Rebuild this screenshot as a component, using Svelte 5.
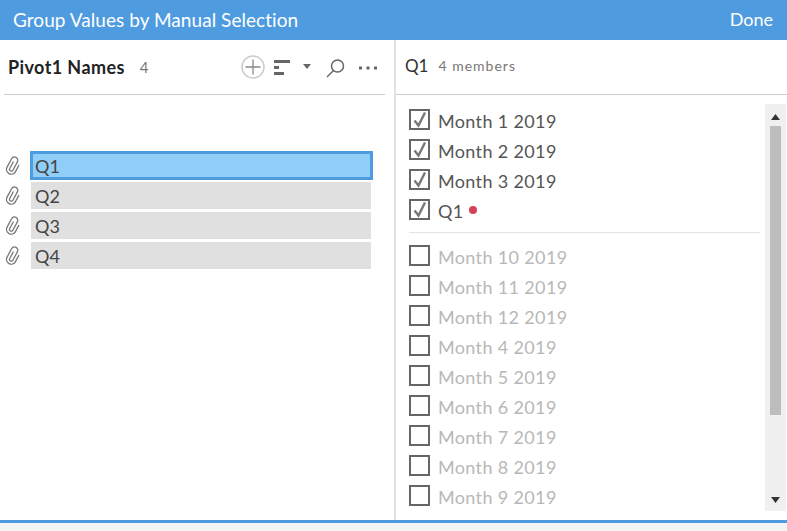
<script>
	const checked = ['Month 1 2019', 'Month 2 2019', 'Month 3 2019', 'Q1'];
	const unchecked = ['Month 10 2019', 'Month 11 2019', 'Month 12 2019', 'Month 4 2019', 'Month 5 2019', 'Month 6 2019', 'Month 7 2019', 'Month 8 2019', 'Month 9 2019'];
	const groups = ['Q1', 'Q2', 'Q3', 'Q4'];
</script>

<div class="dialog">
	<header>
		<span class="heading">Group Values by Manual Selection</span>
		<span>Done</span>
	</header>
	<main>
		<section class="left">
			<div class="toolbar">
				<b>Pivot1 Names</b>
				<span class="count">4</span>
				<div class="tools">
					<svg width="24" height="24" viewBox="0 0 24 24" fill="none"><circle cx="12" cy="12" r="11" stroke="#ccc" stroke-width="1.5" /><path d="M12 4.500v15M4.500 12h15" stroke="#888" stroke-width="1.3" /></svg>
					<svg class="sort" width="16" height="15" viewBox="0 0 16 15" fill="#666"><rect width="16" height="3" /><rect y="6" width="5" height="3" /><rect y="12" width="10" height="3" /></svg>
					<svg class="caret" width="8" height="5" viewBox="0 0 8 5" fill="#666"><path d="M0 0h8L4 5z" /></svg>
					<svg class="search" width="19" height="19" viewBox="0 0 19 19" fill="none" stroke="#666" stroke-width="1.5"><circle cx="11.500" cy="7" r="6" /><path d="M7.500 11.500 1 18" /></svg>
					<svg class="more" width="18" height="4" viewBox="0 0 18 4" fill="#666"><rect x="0" y="0.500" width="3" height="3" /><rect x="7.500" y="0.500" width="3" height="3" /><rect x="15" y="0.500" width="3" height="3" /></svg>
				</div>
			</div>
			<ul class="groups">
				{#each groups as g, i}
					<li>
						<svg class="clip" width="17" height="19" viewBox="0 0 17 19" fill="none" stroke="#777" stroke-width="1.3"><path transform="rotate(28 8.500 9.500)" d="M7.500 5.500v8a1.800 1.800 0 0 0 3.600 0V4a3.300 3.300 0 0 0-6.600 0v9.500a4.300 4.300 0 0 0 9.500 0V6" /></svg>
						<div class="name" class:active={i === 0}>{g}</div>
					</li>
				{/each}
			</ul>
		</section>
		<section class="right">
			<div class="title"><span>Q1</span><small>4 members</small></div>
			<div class="listwrap">
				<div class="list">
					{#each checked as m}
						<div class="row">
							<svg class="box" width="21" height="21" viewBox="0 0 21 21" fill="none"><rect x="1" y="1" width="19" height="19" stroke="#666" stroke-width="2" /><path d="M5.500 11.500 9.500 16.500 16 3.500" stroke="#777" stroke-width="2.400" /></svg>
							<span>{m}</span>
							{#if m === 'Q1'}<i class="dot"></i>{/if}
						</div>
					{/each}
					<hr />
					{#each unchecked as m}
						<div class="row off">
							<svg class="box" width="21" height="21" viewBox="0 0 21 21" fill="none"><rect x="1" y="1" width="19" height="19" stroke="#666" stroke-width="2" /></svg>
							<span>{m}</span>
						</div>
					{/each}
				</div>
				<div class="scrollbar">
					<svg width="9" height="6" viewBox="0 0 9 6" fill="#333"><path d="M4.500 0l4.500 6H0z" /></svg>
					<div class="thumb"></div>
					<svg width="9" height="6" viewBox="0 0 9 6" fill="#333"><path d="M0 0h9L4.500 6z" /></svg>
				</div>
			</div>
		</section>
	</main>
	<div class="footer"></div>
</div>

<style>
	:global(body) {
		margin: 0;
		background: #fff;
	}

	.dialog {
		width: 787px;
		height: 531px;
		display: flex;
		flex-direction: column;
		font-family: 'Lato', sans-serif;
		color: #333;
		overflow: hidden;
	}

	header {
		height: 40px;
		flex: none;
		background: #4e9be0;
		color: #fff;
		font-size: 18px;
		display: flex;
		justify-content: space-between;
		align-items: center;
		padding: 0 14px 2px 13px;
		box-sizing: border-box;
	}

	.heading {
		font-size: 19px;
		letter-spacing: 0.05px;
	}

	main {
		flex: 1;
		display: flex;
		min-height: 0;
	}

	.footer {
		flex: none;
		height: 8px;
		border-top: 3px solid #4e9be0;
		background: #f5f5f5;
	}

	.left {
		width: 396px;
		flex: none;
		box-sizing: border-box;
		border-right: 2px solid #e2e2e2;
	}

	.toolbar {
		height: 54px;
		margin: 0 9px 0 4px;
		padding-left: 4px;
		border-bottom: 1px solid #ccc;
		display: flex;
		align-items: center;
		gap: 15px;
	}

	.toolbar b {
		font-size: 18px;
		font-weight: 700;
		color: #222;
		letter-spacing: 0.4px;
	}

	.count {
		font-size: 15px;
		color: #777;
	}

	.tools {
		margin-left: auto;
		margin-right: 8px;
		display: flex;
		align-items: center;
	}

	.sort {
		margin-left: 9px;
	}

	.caret {
		margin-left: 13px;
		margin-top: -1px;
	}

	.search {
		margin-left: 15px;
		margin-top: 3px;
	}

	.more {
		margin-left: 14px;
		margin-top: 2px;
	}

	.groups {
		list-style: none;
		margin: 56px 0 0;
		padding: 0;
	}

	.groups li {
		display: flex;
		align-items: flex-start;
		height: 30px;
		padding-left: 4px;
	}

	.clip {
		flex: none;
		margin: 5px 10px 0 0;
	}

	.name {
		width: 340px;
		height: 27px;
		margin-top: 1px;
		line-height: 28px;
		box-sizing: border-box;
		padding-left: 4px;
		background: #e0e0e0;
		font-size: 18px;
		color: #444;
	}

	.name.active {
		background: #90cdf7;
		border: 3px solid #4e9be0;
		line-height: 25px;
		padding-left: 2px;
		height: 29px;
		width: 343px;
		margin: 0 0 0 -1px;
	}

	.right {
		flex: 1;
		min-width: 0;
	}

	.title {
		height: 50px;
		padding: 0 0 4px 9px;
		border-bottom: 1px solid #ccc;
		display: flex;
		align-items: center;
		gap: 10px;
		font-size: 17px;
	}

	.title small {
		font-size: 14px;
		color: #777;
		letter-spacing: 1px;
	}

	.listwrap {
		display: flex;
		padding: 9px 1px 0 13px;
	}

	.list {
		flex: 1;
		padding-right: 5px;
	}

	.row {
		display: flex;
		align-items: center;
		gap: 8px;
		height: 30px;
		font-size: 18px;
		letter-spacing: 0.35px;
		color: #555;
	}

	.box {
		align-self: flex-start;
		margin-top: 5px;
		flex: none;
	}

	.row span {
		margin-top: 3px;
	}

	.row.off {
		color: #b8b8b8;
	}

	.dot {
		width: 8px;
		height: 8px;
		border-radius: 50%;
		background: #d6405a;
		margin: 2px 0 0 -3px;
	}

	hr {
		border: 0;
		border-top: 1px solid #e2e2e2;
		margin: 8px 0 7px;
	}

	.scrollbar {
		width: 21px;
		height: 407px;
		flex: none;
		background: #f0f0f0;
		display: flex;
		flex-direction: column;
		align-items: center;
		justify-content: space-between;
		padding: 10px 0 8px;
		box-sizing: border-box;
	}

	.thumb {
		width: 11px;
		height: 289px;
		background: #bdbdbd;
		margin: 6px 0 auto;
	}
</style>
